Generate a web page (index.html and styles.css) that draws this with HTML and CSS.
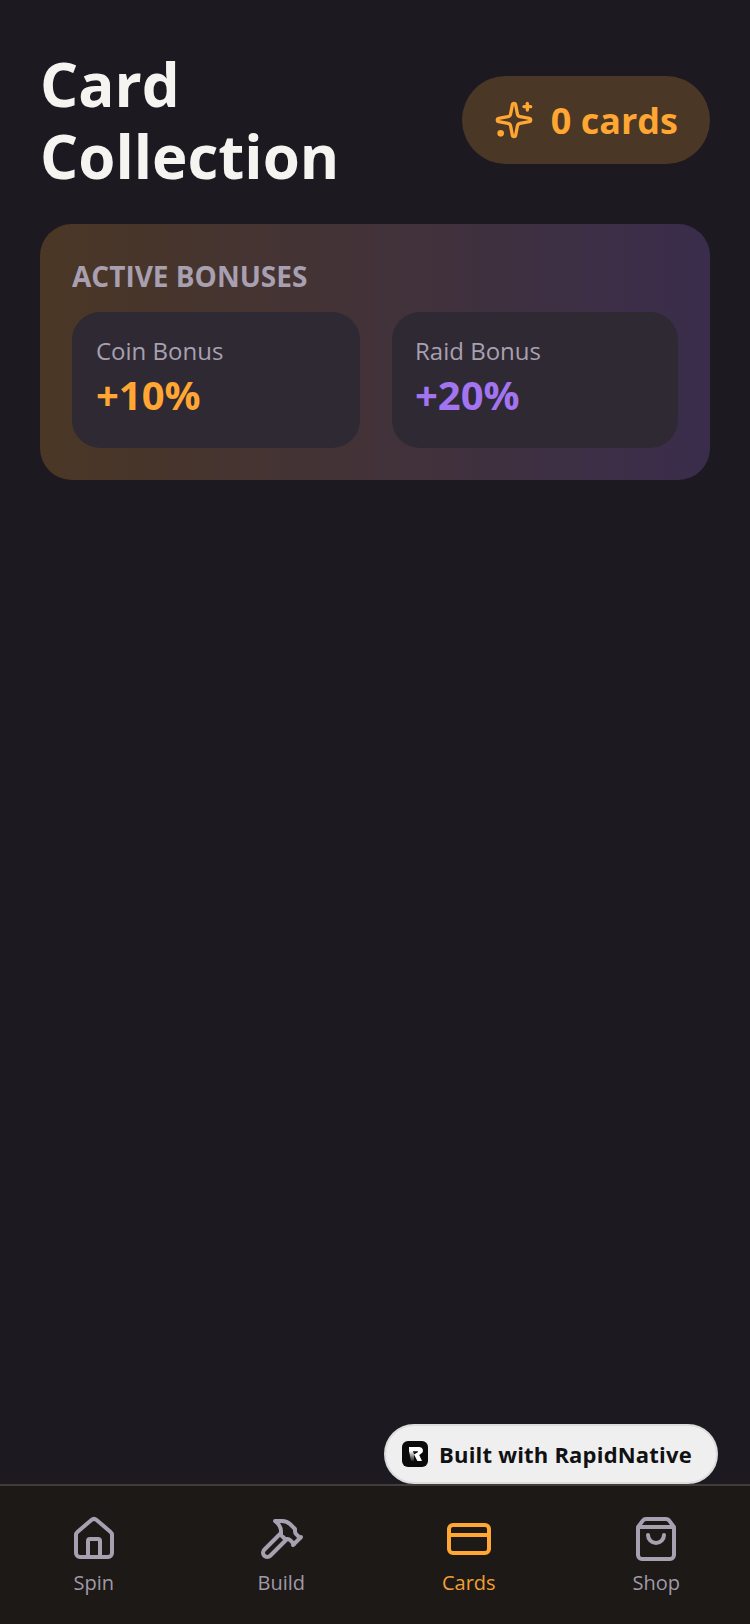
FILE: index.html
```html
<!DOCTYPE html>
<html lang="en">
<head>
<meta charset="utf-8">
<title>Card Collection</title>
<link rel="stylesheet" href="styles.css">
</head>
<body>
<div class="app">
  <main class="main">
    <header class="header">
      <h1 class="title">Card Collection</h1>
      <div class="count-pill">
        <svg class="icon-sparkle" viewBox="0 0 24 24" fill="none" stroke="currentColor" stroke-width="2" stroke-linecap="round" stroke-linejoin="round"><path d="M11.017 2.814a1 1 0 0 1 1.966 0l1.051 5.558a2 2 0 0 0 1.594 1.594l5.558 1.051a1 1 0 0 1 0 1.966l-5.558 1.051a2 2 0 0 0-1.594 1.594l-1.051 5.558a1 1 0 0 1-1.966 0l-1.051-5.558a2 2 0 0 0-1.594-1.594l-5.558-1.051a1 1 0 0 1 0-1.966l5.558-1.051a2 2 0 0 0 1.594-1.594z"/><path d="M20 2v4"/><path d="M22 4h-4"/><circle cx="4" cy="20" r="1" fill="currentColor"/></svg>
        <span class="count-text">0 cards</span>
      </div>
    </header>
    <section class="bonus-card">
      <h2 class="bonus-heading">ACTIVE BONUSES</h2>
      <div class="bonus-row">
        <div class="bonus-item bonus-coin">
          <div class="bonus-label">Coin Bonus</div>
          <div class="bonus-value value-orange">+10%</div>
        </div>
        <div class="bonus-item bonus-raid">
          <div class="bonus-label">Raid Bonus</div>
          <div class="bonus-value value-purple">+20%</div>
        </div>
      </div>
    </section>
  </main>
  <nav class="tabbar">
    <div class="tab">
      <svg class="tab-icon" viewBox="0 0 24 24" fill="none" stroke="currentColor" stroke-width="2" stroke-linecap="round" stroke-linejoin="round"><path d="M15 21v-8a1 1 0 0 0-1-1h-4a1 1 0 0 0-1 1v8"/><path d="M3 10a2 2 0 0 1 .709-1.528l7-5.999a2 2 0 0 1 2.582 0l7 5.999A2 2 0 0 1 21 10v9a2 2 0 0 1-2 2H5a2 2 0 0 1-2-2z"/></svg>
      <span class="tab-label">Spin</span>
    </div>
    <div class="tab">
      <svg class="tab-icon" viewBox="0 0 24 24" fill="none" stroke="currentColor" stroke-width="2" stroke-linecap="round" stroke-linejoin="round"><path d="m15 12-8.373 8.373a1 1 0 1 1-3-3L12 9"/><path d="m18 15 4-4"/><path d="m21.5 11.5-1.914-1.914A2 2 0 0 1 19 8.172V7l-2.26-2.26a6 6 0 0 0-4.202-1.756L9 2.96l.92.82A6.18 6.18 0 0 1 12 8.4V10l2 2h1.172a2 2 0 0 1 1.414.586L18.5 14.5"/></svg>
      <span class="tab-label">Build</span>
    </div>
    <div class="tab tab-active">
      <svg class="tab-icon" viewBox="0 0 24 24" fill="none" stroke="currentColor" stroke-width="2" stroke-linecap="round" stroke-linejoin="round"><rect width="20" height="14" x="2" y="5" rx="2"/><line x1="2" x2="22" y1="10" y2="10"/></svg>
      <span class="tab-label">Cards</span>
    </div>
    <div class="tab">
      <svg class="tab-icon" viewBox="0 0 24 24" fill="none" stroke="currentColor" stroke-width="2" stroke-linecap="round" stroke-linejoin="round"><path d="M16 10a4 4 0 0 1-8 0"/><path d="M3.103 6.034h17.794"/><path d="M3.4 5.467a2 2 0 0 0-.4 1.2V20a2 2 0 0 0 2 2h14a2 2 0 0 0 2-2V6.667a2 2 0 0 0-.4-1.2l-2.1-2.8A2 2 0 0 0 17 2H7a2 2 0 0 0-1.6.8z"/></svg>
      <span class="tab-label">Shop</span>
    </div>
    <div class="built-badge">
      <svg class="built-logo" viewBox="0 0 26 26"><defs><linearGradient id="stem" x1="0" y1="0" x2="0" y2="1"><stop offset="0" stop-color="#fff"/><stop offset="1" stop-color="#fff" stop-opacity="0.1"/></linearGradient></defs><rect width="26" height="26" rx="6" fill="#0b0b0c"/><path d="M7 6h10.5a3.5 3.5 0 0 1 1.8 6.5L17.2 14 20 20h-4.6l-3.4-6.4 3.8-2.3c.5-.4.3-1.1-.3-1.1H7z" fill="#fff"/><path d="M7 10h3.6l1.4 2.6V20H9z" fill="url(#stem)"/></svg>
      <span class="built-text">Built with RapidNative</span>
    </div>
  </nav>
</div>
</body>
</html>
```
FILE: styles.css
```css
* { box-sizing: border-box; }
html, body { margin: 0; padding: 0; }
body {
  width: 750px;
  height: 1624px;
  background: #1c1a20;
  font-family: "Open Sans", "Noto Sans", sans-serif;
  overflow: hidden;
}
.app {
  display: flex;
  flex-direction: column;
  height: 1624px;
}
.main {
  flex: 1;
  padding: 48px 40px 0;
}
.header {
  display: flex;
  align-items: center;
  justify-content: space-between;
  margin-bottom: 32px;
}
.title {
  margin: 0;
  flex: 1;
  font-size: 60px;
  line-height: 72px;
  font-weight: 700;
  color: #f5f4f1;
}
.count-pill {
  display: flex;
  align-items: center;
  gap: 17px;
  height: 88px;
  padding: 2px 32px 0;
  border-radius: 44px;
  background: #4a3725;
  color: #ffa633;
}
.icon-sparkle { width: 40px; height: 40px; flex: none; margin-top: -2px; }
.count-text {
  font-size: 36px;
  line-height: 48px;
  font-weight: 700;
}
.bonus-card {
  height: 256px;
  padding: 32px;
  border-radius: 32px;
  background: linear-gradient(90deg, #4a3725 0%, #3a2d4c 100%);
}
.bonus-heading {
  margin: 0 0 16px;
  font-size: 28px;
  line-height: 40px;
  font-weight: 700;
  color: #a8a0b0;
}
.bonus-row {
  display: flex;
  gap: 32px;
}
.bonus-item {
  height: 136px;
  padding: 21px 24px;
  border-radius: 28px;
  background: #2e2933;
}
.bonus-coin { width: 288px; }
.bonus-raid { width: 286px; padding-left: 23px; }
.bonus-label {
  font-size: 24px;
  line-height: 36px;
  color: #a8a0b0;
}
.bonus-value {
  font-size: 40px;
  line-height: 52px;
  font-weight: 700;
}
.value-orange { color: #ffa633; }
.value-purple { color: #a374f0; }
.tabbar {
  position: relative;
  display: flex;
  height: 140px;
  border-top: 2px solid #3f3c3a;
  background: #1c1917;
}
.tab {
  flex: 1;
  display: flex;
  flex-direction: column;
  align-items: center;
  padding-top: 29px;
  color: #a8a0b0;
}
.tab-active { color: #ffa633; }
.tab-icon { width: 48px; height: 48px; flex: none; }
.tab-label {
  margin-top: 6px;
  font-size: 20px;
  line-height: 28px;
  opacity: 0.95;
}
.built-badge {
  position: absolute;
  left: 384px;
  top: -62px;
  width: 334px;
  height: 60px;
  display: flex;
  align-items: center;
  gap: 11px;
  padding-left: 16px;
  border-radius: 30px;
  border: 2px solid #dcdcdc;
  background: #efefef;
}
.built-logo { width: 26px; height: 26px; flex: none; }
.built-text {
  font-size: 22px;
  line-height: 32px;
  font-weight: 700;
  letter-spacing: 0.2px;
  color: #111114;
}
```
